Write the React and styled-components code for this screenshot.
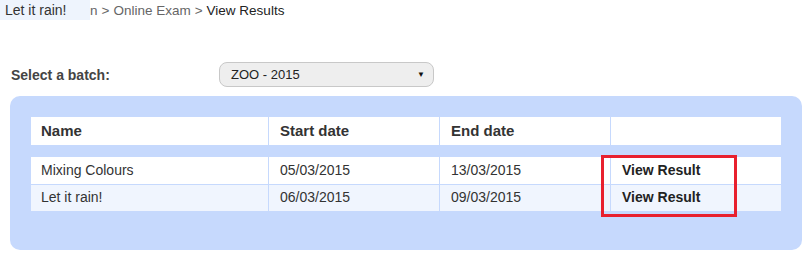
import styled, { createGlobalStyle } from "styled-components";

const Global = createGlobalStyle`
  body {
    margin: 0;
    background: #fff;
    font-family: Arial, "Liberation Sans", sans-serif;
    color: #333;
  }
`;

const Page = styled.div`
  width: 808px;
  height: 254px;
  display: flex;
  flex-direction: column;
`;

const Crumbs = styled.div`
  display: flex;
  align-items: center;
  height: 20px;
  font-size: 13.5px;
  color: #666;
`;

const Chip = styled.div`
  width: 85px;
  height: 20px;
  padding-left: 5px;
  display: flex;
  align-items: center;
  background: #eef4fd;
  color: #333;
  font-size: 14px;
`;

const Sep = styled.span`
  margin: 0 4px;
`;

const Current = styled.span`
  color: #222;
`;

const BatchRow = styled.div`
  display: flex;
  align-items: center;
  margin-top: 42px;
  height: 25px;
  padding-left: 11px;
`;

const Label = styled.label`
  width: 208px;
  font-size: 14px;
  font-weight: bold;
  color: #444;
`;

const Select = styled.div`
  box-sizing: border-box;
  width: 215px;
  height: 25px;
  padding: 0 8px 0 11px;
  display: flex;
  align-items: center;
  justify-content: space-between;
  background: #eeeeee;
  border: 1px solid #c8c8c8;
  border-radius: 8px;
  font-size: 13px;
  color: #222;
`;

const Caret = styled.span`
  font-size: 8px;
  color: #111;
`;

const Panel = styled.div`
  margin: 9px 0 0 10px;
  width: 792px;
  height: 154px;
  box-sizing: border-box;
  padding: 21px 21px 0;
  background: #c6d9fd;
  border-radius: 10px;
`;

const Row = styled.div`
  display: grid;
  grid-template-columns: 237px 171px 171px 171px;
  height: ${(p) => p.h}px;
  background: ${(p) => p.bg || "#fff"};
  border-bottom: ${(p) => (p.line ? "1px solid #c6d9fd" : "none")};
`;

const Cell = styled.div`
  display: flex;
  align-items: center;
  padding-left: ${(p) => (p.first ? 10 : 11)}px;
  padding-bottom: 2px;
  border-left: ${(p) => (p.first ? "none" : "1px solid #c6d9fd")};
  font-size: ${(p) => (p.head ? 15 : 14)}px;
  font-weight: ${(p) => (p.head || p.bold ? "bold" : "normal")};
  color: ${(p) => (p.bold ? "#222" : "#333")};
`;

const Body = styled.div`
  position: relative;
  margin-top: 12px;
`;

const Highlight = styled.div`
  position: absolute;
  left: 570px;
  top: -2px;
  width: 136px;
  height: 62px;
  box-sizing: border-box;
  border: 3px solid #e8202e;
`;

const rows = [
  { name: "Mixing Colours", start: "05/03/2015", end: "13/03/2015" },
  { name: "Let it rain!", start: "06/03/2015", end: "09/03/2015" },
];

const App = () => (
  <>
    <Global />
    <Page>
      <Crumbs>
        <Chip>Let it rain!</Chip>
        <span>n</span>
        <Sep>&gt;</Sep>
        <span>Online Exam</span>
        <Sep>&gt;</Sep>
        <Current>View Results</Current>
      </Crumbs>
      <BatchRow>
        <Label>Select a batch:</Label>
        <Select>
          <span>ZOO - 2015</span>
          <Caret>▼</Caret>
        </Select>
      </BatchRow>
      <Panel>
        <Row h={28}>
          <Cell head first>Name</Cell>
          <Cell head>Start date</Cell>
          <Cell head>End date</Cell>
          <Cell head />
        </Row>
        <Body>
          {rows.map((r, i) => (
            <Row
              key={r.name}
              h={i === 0 ? 27 : 26}
              line={i === 0}
              bg={i === 1 ? "#f0f5fe" : "#fff"}
            >
              <Cell first>{r.name}</Cell>
              <Cell>{r.start}</Cell>
              <Cell>{r.end}</Cell>
              <Cell bold>View Result</Cell>
            </Row>
          ))}
          <Highlight />
        </Body>
      </Panel>
    </Page>
  </>
);

export default App;
